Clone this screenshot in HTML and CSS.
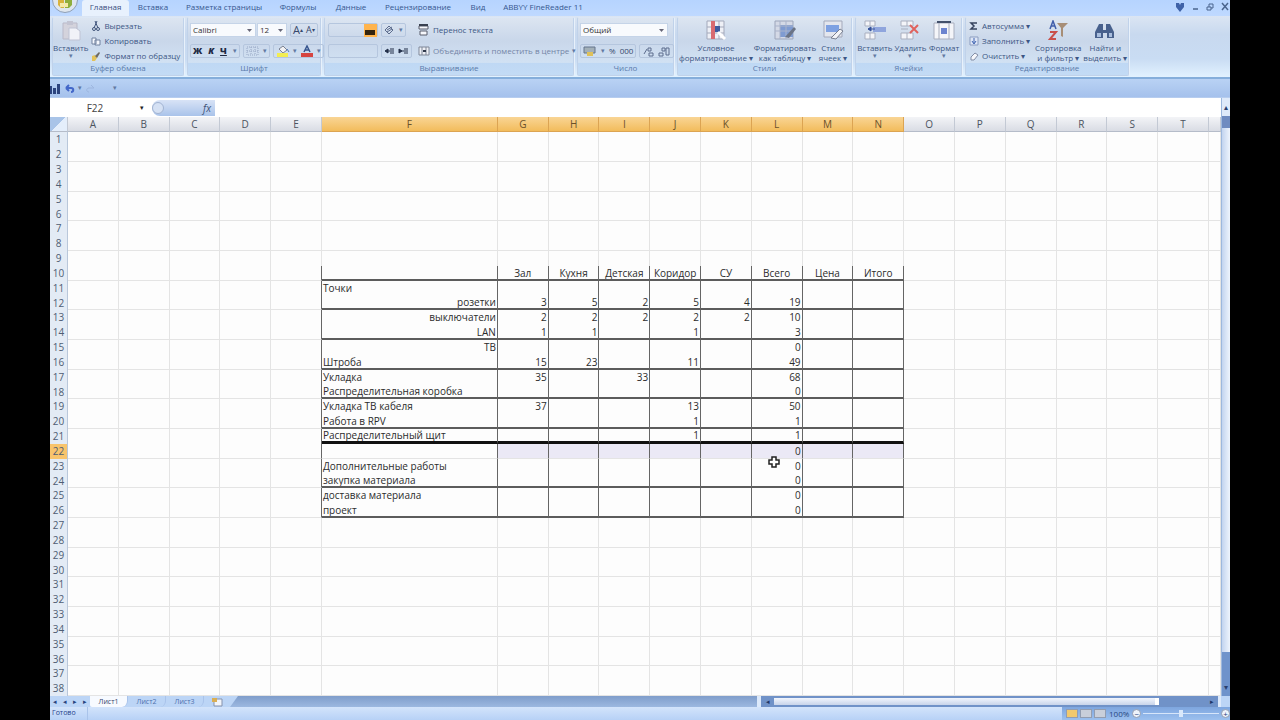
FILE: index.html
```html
<!DOCTYPE html>
<html lang="ru">
<head>
<meta charset="utf-8">
<title>Лист1</title>
<link rel="stylesheet" href="styles.css">
</head>
<body>
<main class="app">
  <nav class="tabs">
    <button class="office" aria-label="Office"><svg width="26" height="14" viewBox="0 0 26 14"><circle cx="13" cy="0" r="12.500" fill="#dfe6ee" stroke="#8f9fb5"/><path d="M6 0h6v8H9L6 5z" fill="#d9b23c"/><path d="M13 0h7v5l-3 3h-4z" fill="#8fae3c"/><path d="M8 3h8v4H8z" fill="#f5e9a8"/></svg></button>
    <button class="tab active">Главная</button>
    <button class="tab t2">Вставка</button>
    <button class="tab t3">Разметка страницы</button>
    <button class="tab t4">Формулы</button>
    <button class="tab t5">Данные</button>
    <button class="tab t6">Рецензирование</button>
    <button class="tab t7">Вид</button>
    <button class="tab t8">ABBYY FineReader 11</button>
    <span class="win">
      <button aria-label="Справка"><svg width="10" height="10" viewBox="0 0 10 10"><path d="M1 1h3l1 2 1-2h3v4L5 10 1 5z" fill="#3f62a8"/></svg></button>
      <button aria-label="Свернуть"><svg width="10" height="10" viewBox="0 0 10 10"><path d="M3 7h5" stroke="#4a648e" stroke-width="1.500"/></svg></button>
      <button aria-label="Восстановить"><svg width="10" height="10" viewBox="0 0 10 10"><path d="M2 5h4v3H2zM4 5V2h4v4H6" fill="none" stroke="#4a648e"/></svg></button>
      <button aria-label="Закрыть"><svg width="10" height="10" viewBox="0 0 10 10"><path d="M2 1l6 7M8 1L2 8" stroke="#4a648e" stroke-width="1.500"/></svg></button>
    </span>
  </nav>

  <section class="ribbon">
    <div class="group g-clip">
      <div class="body">
        <button class="big"><svg width="24" height="21" viewBox="0 0 24 21"><path d="M4 3h14v16H4z" fill="#d4d3dc" stroke="#b9b9c8"/><path d="M8 1h6v4H8z" fill="#c3c4d2"/><path d="M10 8h7l4 3v9H10z" fill="#f1f2f8" stroke="#bfc3d4"/></svg><span>Вставить</span><i>▾</i></button>
        <div class="list">
          <button><svg width="10" height="10" viewBox="0 0 10 10"><path d="M3 7L6 0M7 7L4 0" stroke="#41557c" fill="none"/><circle cx="3" cy="8" r="1.500" fill="none" stroke="#41557c"/><circle cx="7" cy="8" r="1.500" fill="none" stroke="#41557c"/></svg>Вырезать</button>
          <button><svg width="10" height="10" viewBox="0 0 10 10"><path d="M1 2h4v6H1zM4 4h5v5H4z" fill="#f4f7fd" stroke="#71819f"/></svg>Копировать</button>
          <button><svg width="10" height="10" viewBox="0 0 10 10"><path d="M1 5l3-1 2 3-2 3H1z" fill="#e2c25a"/><path d="M4 5l4-4 1 1-3 5z" fill="#6d6a63"/></svg>Формат по образцу</button>
        </div>
      </div>
      <h2>Буфер обмена</h2>
    </div>
    <div class="group g-font">
      <div class="body rows">
        <div class="line"><select class="c-font" aria-label="Шрифт"><option>Calibri</option></select><select class="c-size" aria-label="Размер"><option>12</option></select><span class="btns"><button class="s12">A<sup>▴</sup></button><button class="s10">A<sup>▾</sup></button></span></div>
        <div class="line"><span class="btns wide"><button class="bold">Ж</button><button class="bold ital">К</button><button class="bold und">Ч</button><i>▾</i></span><span class="btns"><button aria-label="Границы"><svg width="14" height="10" viewBox="0 0 14 10"><path d="M1 1h11v8H1zM1 5h11M5 1v8M9 1v8" fill="none" stroke="#98a8c5" stroke-dasharray="1 1"/></svg></button><i>▾</i></span><span class="btns"><button aria-label="Заливка"><svg width="14" height="12" viewBox="0 0 14 12"><path d="M3 4l4-3 4 4-4 3z" fill="#f2f2f4" stroke="#7b8190"/><path d="M11 4l2 3" stroke="#4c79c0"/><path d="M1 8h11v4H1z" fill="#f2ed52"/></svg></button><i>▾</i><button aria-label="Цвет шрифта"><svg width="14" height="12" viewBox="0 0 14 12"><path d="M4 7l3-6 3 6M5 5h4" fill="none" stroke="#37558e" stroke-width="1.500"/><path d="M1 8h12v4H1z" fill="#d64541"/></svg></button><i>▾</i></span></div>
      </div>
      <h2>Шрифт</h2>
    </div>
    <div class="group g-align">
      <div class="body">
        <div class="alcol">
          <div class="line"><span class="btns abox"><button class="hot" aria-label="По нижнему краю"><svg width="13" height="13" viewBox="0 0 13 13"><path d="M1 6h10v5H1z" fill="#33240e"/></svg></button></span><span class="btns"><button aria-label="Ориентация"><svg width="12" height="11" viewBox="0 0 12 11"><path d="M1 5l4-4 4 4-4 4zM3 5l5-3M3 7l5-3" fill="none" stroke="#5c6c8d"/></svg></button><i>▾</i></span></div>
          <div class="line"><span class="btns abox"></span><span class="btns"><button aria-label="Уменьшить отступ"><svg width="11" height="8" viewBox="0 0 11 8"><path d="M1 4l3-2v4zM4 4h6M6 2h4M6 6h4" stroke="#222f49" fill="#222f49"/></svg></button><button aria-label="Увеличить отступ"><svg width="11" height="8" viewBox="0 0 11 8"><path d="M4 4L1 2v4zM4 4h6M6 2h4M6 6h4" stroke="#222f49" fill="#222f49"/></svg></button></span></div>
        </div>
        <div class="list two">
          <button><svg width="12" height="12" viewBox="0 0 12 12"><path d="M1 2h9v3H1zM2 7h7v4H2z" fill="#f7f8fc" stroke="#585d6b"/><path d="M1 1h9" stroke="#39404f" stroke-width="2"/></svg>Перенос текста</button>
          <button class="dim"><svg width="12" height="12" viewBox="0 0 12 12"><path d="M1 2h10v8H1zM4 2v8M8 2v8" fill="#eef0f6" stroke="#7e8798"/><path d="M5 6h3" stroke="#30384b" stroke-width="2"/></svg>Объединить и поместить в центре <i>▾</i></button>
        </div>
      </div>
      <h2>Выравнивание</h2>
    </div>
    <div class="group g-num">
      <div class="body rows">
        <div class="line"><select class="c-num" aria-label="Формат"><option>Общий</option></select></div>
        <div class="line"><span class="btns fill"><button aria-label="Деньги"><svg width="14" height="12" viewBox="0 0 14 12"><path d="M1 2h11v6H1z" fill="#a3b0b8" stroke="#65748c"/><path d="M4 7h6v4H4z" fill="#dfc15a"/></svg></button><i>▾</i><button>%</button><button>000</button></span><span class="btns"><button aria-label="Больше знаков"><svg width="13" height="11" viewBox="0 0 13 11"><path d="M2 8l3-5M6 2h3v3H6zM7 7h4v3H7z" fill="none" stroke="#5c6c8d"/></svg></button><button aria-label="Меньше знаков"><svg width="13" height="11" viewBox="0 0 13 11"><path d="M1 7h4v3H1zM4 2h3v3H4zM8 2h3v7H8z" fill="none" stroke="#5c6c8d"/></svg></button></span></div>
      </div>
      <h2>Число</h2>
    </div>
    <div class="group g-style">
      <div class="body">
        <button class="big w76"><svg width="22" height="21" viewBox="0 0 22 21"><path d="M2 1h17v18H2zM2 7h17M2 13h17M14 1v18" fill="#eef0f6" stroke="#a3a9bb"/><path d="M6 1h4v18H6z" fill="#d86a70"/><path d="M10 6h5v6h-5z" fill="#3e5a9e"/><path d="M13 12l7 7" stroke="#fff" stroke-width="3"/></svg><span>Условное<br>форматирование ▾</span></button>
        <button class="big w62"><svg width="24" height="21" viewBox="0 0 24 21"><path d="M2 1h18v18H2z" fill="#d4d9e6" stroke="#9ca5ba"/><path d="M7 5h13v12H7z" fill="#7f9bd1"/><path d="M2 6h18M2 11h18M7 1v18M13 1v18" stroke="#a9b3cb"/><path d="M12 17L21 7l2 2-7 9z" fill="#6b7486"/></svg><span>Форматировать<br>как таблицу ▾</span></button>
        <button class="big w32"><svg width="22" height="21" viewBox="0 0 22 21"><path d="M2 1h18v16H2z" fill="#e3e6ee" stroke="#a3a9bb"/><path d="M4 5h13v7H4z" fill="#7ea1e2"/><path d="M9 18l9-9 3 2-7 8z" fill="#f3f4f8" stroke="#777f90"/></svg><span>Стили<br>ячеек ▾</span></button>
      </div>
      <h2>Стили</h2>
    </div>
    <div class="group g-cells">
      <div class="body">
        <button class="big w35"><svg width="24" height="21" viewBox="0 0 24 21"><path d="M2 1h10v5H2zM2 13h10v6H2zM7 1v5M7 13v6" fill="#f4f5f9" stroke="#a9afbf"/><path d="M10 7h13v5H10z" fill="#8fa5dd"/><path d="M5 9h7M5 9l3-2v4z" stroke="#36539b" fill="#36539b"/></svg><span>Вставить</span><i>▾</i></button>
        <button class="big w32"><svg width="22" height="21" viewBox="0 0 22 21"><path d="M2 1h12v5H2zM2 13h12v6H2zM8 1v5M8 13v6M2 9h7" fill="#f4f5f9" stroke="#a9afbf"/><path d="M11 5l8 8M19 5l-8 8" stroke="#e0625d" stroke-width="2"/></svg><span>Удалить</span><i>▾</i></button>
        <button class="big w32"><svg width="24" height="21" viewBox="0 0 24 21"><path d="M2 3h20v16H2zM7 3v16M17 3v16" fill="#f4f5f9" stroke="#a9afbf"/><path d="M9 8h6v6H9z" fill="#6b83cf"/><path d="M5 2h14" stroke="#42506b" stroke-width="2"/></svg><span>Формат</span><i>▾</i></button>
      </div>
      <h2>Ячейки</h2>
    </div>
    <div class="group g-edit">
      <div class="body">
        <div class="list">
          <button><svg width="10" height="10" viewBox="0 0 10 10"><path d="M8 2H2l3 3-3 3h6" fill="none" stroke="#36435e" stroke-width="1.500"/></svg>Автосумма ▾</button>
          <button><svg width="10" height="10" viewBox="0 0 10 10"><path d="M1 1h8v8H1z" fill="#dfe7f7" stroke="#8b9dc0"/><path d="M5 2v5M3 5l2 3 2-3" stroke="#3c62b0" fill="none"/></svg>Заполнить ▾</button>
          <button><svg width="10" height="10" viewBox="0 0 10 10"><path d="M2 6l4-4 3 2-4 5H2z" fill="#f6f7fb" stroke="#828da5"/></svg>Очистить ▾</button>
        </div>
        <button class="big w47"><svg width="24" height="21" viewBox="0 0 24 21"><path d="M4 9l3-8 3 8M5 6h4" fill="none" stroke="#3f5daa" stroke-width="1.500"/><path d="M4 12h6l-6 7h6" fill="none" stroke="#c9504a" stroke-width="2"/><path d="M11 3h11l-5 5v9l-2-1V8z" fill="#a78e77"/></svg><span>Сортировка<br>и фильтр ▾</span></button>
        <button class="big w42"><svg width="24" height="21" viewBox="0 0 24 21"><path d="M2 18v-6l4-8h4v6h3V4h4l4 8v6h-7v-5h-4v5z" fill="#48618d"/><path d="M4 13h4v4H4zM16 13h3v4h-3z" fill="#a9bede"/></svg><span>Найти и<br>выделить ▾</span></button>
      </div>
      <h2>Редактирование</h2>
    </div>
  </section>

  <div class="quick">
    <button aria-label="Сохранить"><svg width="11" height="11" viewBox="0 0 11 11"><path d="M0 3h2v8H0zM3 5h3v6H3zM7 1h3v10H7z" fill="#2b437e"/></svg></button>
    <button aria-label="Отменить"><svg width="11" height="11" viewBox="0 0 11 11"><path d="M2 5h5c3 0 3 4 0 4M2 5l3-3M2 5l3 3" fill="none" stroke="#4367c9" stroke-width="2"/></svg></button><i>▾</i>
    <button aria-label="Вернуть"><svg width="11" height="11" viewBox="0 0 11 11"><path d="M9 5H4c-3 0-3 4 0 4M9 5L6 2" fill="none" stroke="#9db6df"/></svg></button>
    <i class="more">▾</i>
  </div>

  <div class="grid-area">
    <div class="grid-main">
      <div class="formula">
        <input class="name" value="F22" aria-label="Имя">
        <i>▾</i>
        <button class="fx"><span></span><em>fx</em></button>
        <input class="fbar" value="" aria-label="Строка формул">
      </div>
      <table class="sheet" id="sheet"><thead></thead><tbody></tbody></table>
      <svg class="cursor" width="12" height="12" viewBox="0 0 12 12"><path d="M4 1h4v3h3v4H8v3H4V8H1V4h3z" fill="#fff" stroke="#222" stroke-width="1.500"/></svg>
    </div>
    <div class="vscroll"><button>▴</button><span class="thumb"></span><span class="track"></span><button class="down">▾</button></div>
  </div>

  <div class="sheets">
    <span class="arrows"><button>◂</button><button>◂</button><button>▸</button><button>▸</button></span>
    <button class="st on">Лист1</button><button class="st">Лист2</button><button class="st">Лист3</button>
    <button class="new" aria-label="Новый лист"><svg width="14" height="10" viewBox="0 0 14 10"><path d="M4 2h8v7H4z" fill="#f1f4fa" stroke="#8492ad"/><path d="M2 1h5v4H2z" fill="#d9ae55"/></svg></button>
    <span class="gap"></span>
    <span class="hscroll"><button>◂</button><span class="hthumb"></span><span class="htrack"></span><button>▸</button></span>
  </div>
  <footer class="status"><span class="ready">Готово</span>
    <span class="zoombar"><button class="v1" aria-label="Обычный"></button><button aria-label="Разметка"></button><button aria-label="Страничный"></button><span class="pct">100%</span><button class="rnd">−</button><span class="rail"><b></b></span><button class="rnd">+</button></span>
  </footer>
</main>
<script src="script.js"></script>
</body>
</html>
```
FILE: styles.css
```css
* { box-sizing: border-box; }
body { margin: 0; background: #000; font: 8px/10px "Open Sans", "Noto Sans", sans-serif; color: #3c5684; }
button, input, select { font: inherit; color: inherit; border: 0; padding: 0; margin: 0; background: none; }
button { display: flex; align-items: center; justify-content: center; white-space: nowrap; }
i { font-style: normal; font-size: 7px; color: #6279a2; }
svg { display: block; flex: none; }
.app { margin: 0 50px; background: #bcd5f8; overflow: hidden; }

.tabs { display: flex; height: 16px; background: linear-gradient(#b6d4ff, #bfd9ff); align-items: stretch; }
.office { width: 30px; align-items: flex-start; }
.tab { padding-bottom: 3px; color: #36578f; }
.tab.active { width: 47px; margin-left: 2px; background: #e8f1fd; border-radius: 3px 3px 0 0; color: #3a4f7d; }
.t2 { width: 48px; }
.t3 { width: 94px; }
.t4 { width: 54px; }
.t5 { width: 52px; }
.t6 { width: 82px; }
.t7 { width: 38px; }
.t8 { width: 92px; }
.win { margin-left: auto; display: flex; gap: 5px; padding-bottom: 3px; }

.ribbon { display: flex; gap: 3px; height: 63px; padding: 1px 2px; background: linear-gradient(#dbe5f3, #c8d9ef 30%, #c9dcf3 70%, #e2f2ff); border-bottom: 2px solid #85aedb; }
.group { display: flex; flex-direction: column; border: 1px solid #c0d2ea; border-top-color: #dce7f5; border-radius: 2px; box-shadow: 1px 0 #e8f1fb; background: linear-gradient(#dce5f1, #c9d7ea 40%, #d1e1f3 78%, #bfd8f4 79%, #c3dbf5); }
.group h2 { flex: none; margin: 0; height: 12px; font: inherit; text-align: center; color: #5b7bab; }
.body { flex: 1; min-height: 0; display: flex; padding-top: 2px; }
.rows { flex-direction: column; gap: 7px; padding: 5px 2px 0; }
.g-clip { width: 132px; }
.g-font { width: 134px; }
.g-align { width: 250px; }
.g-num { width: 97px; }
.g-style { width: 175px; }
.g-cells { width: 107px; }
.g-edit { width: 164px; }
.big { flex-direction: column; justify-content: flex-start; width: 36px; }
.big span { margin-top: 2px; }
.big i { line-height: 6px; }
.w76 { width: 76px; }
.w62 { width: 62px; }
.w35 { width: 38px; }
.w32 { width: 34px; }
.w47 { width: 50px; }
.w42 { width: 44px; }
.list { display: flex; flex-direction: column; gap: 4px; padding: 0 3px; align-items: flex-start; }
.list button { gap: 3px; height: 11px; }
.list.two { gap: 10px; padding-top: 4px; }
.dim { color: #7485a6; }
.line { display: flex; gap: 3px; height: 14px; }
select { appearance: none; background: #f8fafd url("data:image/svg+xml,%3Csvg xmlns='http://www.w3.org/2000/svg' width='5' height='3'%3E%3Cpath d='M0 0h5L2.5 3z' fill='%23667'/%3E%3C/svg%3E") no-repeat right 3px center; height: 14px; color: #333; padding-left: 2px; border: 1px solid #c5d4e8; }
.c-font { width: 66px; margin-right: -2px; }
.c-size { width: 30px; }
.c-num { width: 88px; }
.btns { display: flex; align-items: center; gap: 3px; height: 14px; padding: 0 2px; border: 1px solid #b5c6de; border-radius: 2px; color: #37486b; }
.btns.wide { gap: 6px; }
.btns.fill { gap: 4px; }
.btns sup { font-size: 6px; line-height: 6px; }
.s12 { font-size: 11px; }
.s10 { font-size: 9px; }
.bold { font-size: 9px; font-weight: 800; color: #1f2a44; }
.ital { font-style: italic; }
.und { text-decoration: underline; }
.alcol { display: flex; flex-direction: column; gap: 7px; padding: 3px 3px 0; }
.abox { width: 50px; justify-content: flex-end; padding: 0; }
.hot { background: #ffb44d; }

.quick { display: flex; align-items: center; gap: 3px; height: 19px; background: linear-gradient(#b9d2f4, #a5c1ec); border-bottom: 1px solid #b7cdef; }
.more { margin-left: 14px; }

.grid-area { display: flex; }
.grid-main { flex: 1; position: relative; min-width: 0; }
.formula { display: flex; align-items: center; height: 19px; background: #fff; }
.name { width: 90px; height: 17px; padding: 0 4px; text-align: center; font-size: 10px; color: #444; }
.formula i { width: 12px; color: #222; }
.fx { width: 63px; height: 16px; justify-content: space-between; padding-right: 4px; border-radius: 8px 0 0 8px; background: linear-gradient(#d8e3f6, #a9c3ea); color: #3d5177; font-size: 10px; }
.fx span { width: 12px; height: 12px; border: 1px solid #a2b4d2; border-radius: 50%; background: #d5e1f4; }
.fbar { flex: 1; min-width: 0; height: 17px; }
.sheet { width: 100%; table-layout: fixed; border-collapse: separate; border-spacing: 0; background: #fdfdfd; font-size: 10px; line-height: 13px; color: #2c2c2c; }
.sheet th, .sheet td { padding: 0 1px; overflow: hidden; white-space: nowrap; font-weight: 400; border: 0 solid #e4e4e4; border-right-width: 1px; line-height: 13px; }
.sheet tr { height: 15px; }
.sheet tbody tr:nth-child(6n) { height: 14px; }
.sheet tbody tr:nth-child(6n) > * { line-height: 12px; }
.sheet td { text-align: right; }
.sheet tr:nth-child(even) td { border-bottom-width: 1px; }
.c-head { width: 18px; }
.c-f { width: 176px; }
.c-last { width: 12px; }
.sheet thead th { background: linear-gradient(#f3f4f7, #d9dce4); border-right-color: #c3c9d4; border-bottom: 1px solid #b5bcc9; text-align: center; color: #4c545f; }
.sheet thead th.c-head { background: linear-gradient(135deg, #a9c4e8 50%, #e4eefb 51%); }
.sheet thead th.sel { background: linear-gradient(#f9d595, #f2bc5c); border-color: #dca452; color: #6b512a; }
.sheet tbody th { background: #e3ebf5; border-right-color: #b9c7da; color: #4f5d73; }
.sheet tbody th.sel { background: #f8c46c; }
.sheet td.left { text-align: left; }
.sheet td.mid { text-align: center; }
.sheet td.bx { border-right: 1px solid #666; }
.sheet td.edge { border-right: 1px solid #666; }
.sheet tr td.ln { border-bottom: 2px solid #5c5c5c; }
.sheet tr td.thick { border-bottom: 3px solid #111; }
.sheet td.ln, .sheet td.thick { line-height: 12px; }
.sheet td.pick { background: #ebe9f6; }
.cursor { position: absolute; left: 718px; top: 358px; }

.vscroll { display: flex; flex-direction: column; width: 9px; background: #dfeafa; border-left: 1px solid #9db8de; }
.vscroll button { height: 18px; color: #2a3f6d; }
.thumb { flex: 1; border-top: 12px solid #6f8bc0; background: linear-gradient(90deg, #c3d4ef, #eef4fd); }
.track { height: 26px; background: #6f93cb; }
.vscroll .down { background: #6f93cb; }

.sheets { display: flex; height: 11px; background: #bcd5f6; line-height: 9px; font-size: 7px; }
.arrows { display: flex; width: 40px; justify-content: space-around; color: #27437d; }
.st { width: 38px; color: #4c6fac; border-right: 1px solid #a9c3ea; border-radius: 0 0 6px 2px; }
.st.on { background: #f7faff; color: #34446b; }
.new { width: 26px; }
.gap { flex: 1; background: linear-gradient(#7f9dcb, #9cb8e0); clip-path: polygon(8px 0, 100% 0, 100% 100%, 0 100%); }
.hscroll { display: flex; width: 464px; margin-right: 9px; border: 0 solid #dce9fb; border-width: 0 3px 0 4px; background: #7092c8; }
.hscroll button { width: 13px; color: #1f3768; }
.hthumb { flex: 1; margin: 2px 0; background: linear-gradient(#f1f5fd, #c8d4ea); border-right: 4px solid #fff; }
.htrack { width: 46px; }

.status { display: flex; justify-content: space-between; height: 13px; background: linear-gradient(#d3e4fb, #b7d1f6); line-height: 12px; }
.ready { width: 38px; padding-left: 2px; font-size: 7px; color: #26438c; border-right: 1px solid #a9c3ea; }
.zoombar { display: flex; align-items: center; gap: 2px; width: 168px; padding-left: 4px; background: linear-gradient(#7ea6df, #9cc0ee); color: #27467f; }
.zoombar button { width: 12px; height: 9px; background: #c9cfda; border: 1px solid #929db1; }
.zoombar .v1 { background: #f1c96e; }
.pct { padding: 0 1px; }
.zoombar .rnd { width: 9px; border-radius: 50%; background: #edf3fb; }
.rail { flex: 1; height: 1px; background: #d7e6fa; display: flex; align-items: center; justify-content: center; }
.rail b { width: 4px; height: 7px; flex: none; background: #d9e8fb; }
```
FILE: script.js
```js
const letters = "ABCDEFGHIJKLMNOPQRST".split("");
const rows = {
  10: ["", "Зал", "Кухня", "Детская", "Коридор", "СУ", "Всего", "Цена", "Итого"],
  11: ["Точки"],
  12: ["розетки", 3, 5, 2, 5, 4, 19],
  13: ["выключатели", 2, 2, 2, 2, 2, 10],
  14: ["LAN", 1, 1, "", 1, "", 3],
  15: ["ТВ", "", "", "", "", "", 0],
  16: ["Штроба", 15, 23, "", 11, "", 49],
  17: ["Укладка", 35, "", 33, "", "", 68],
  18: ["Распределительная коробка", "", "", "", "", "", 0],
  19: ["Укладка ТВ кабеля", 37, "", "", 13, "", 50],
  20: ["Работа в RPV", "", "", "", 1, "", 1],
  21: ["Распределительный щит", "", "", "", 1, "", 1],
  22: ["", "", "", "", "", "", 0],
  23: ["Дополнительные работы", "", "", "", "", "", 0],
  24: ["закупка материала", "", "", "", "", "", 0],
  25: ["доставка материала", "", "", "", "", "", 0],
  26: ["проект", "", "", "", "", "", 0]
};
const lines = [10, 12, 14, 16, 18, 20, 24, 26];
const sheet = document.getElementById("sheet");

const head = letters.map((l, i) => {
  const cls = [l === "F" ? "c-f" : "", i >= 5 && i <= 13 ? "sel" : ""].join(" ");
  return `<th class="${cls}">${l}</th>`;
});
sheet.tHead.innerHTML = `<tr><th class="c-head"></th>${head.join("")}<th class="c-last"></th></tr>`;

let html = "";
for (let r = 1; r <= 38; r++) {
  html += `<tr><th${r === 22 ? ' class="sel"' : ""}>${r}</th>`;
  for (let c = 0; c <= 20; c++) {
    const cls = [];
    let text = "";
    if (r >= 10 && r <= 26) {
      if (c === 4) cls.push("edge");
      if (c >= 5 && c <= 13) {
        cls.push("bx");
        text = (rows[r] || [])[c - 5] ?? "";
        if (lines.includes(r)) cls.push("ln");
        if (r === 21) cls.push("thick");
        if (r === 22 && c > 5) cls.push("pick");
        if (r === 10) cls.push("mid");
        else if (c === 5 && (r < 12 || r > 15)) cls.push("left");
      }
    }
    html += `<td class="${cls.join(" ")}">${text}</td>`;
  }
  html += "</tr>";
}
sheet.tBodies[0].innerHTML = html;
```
